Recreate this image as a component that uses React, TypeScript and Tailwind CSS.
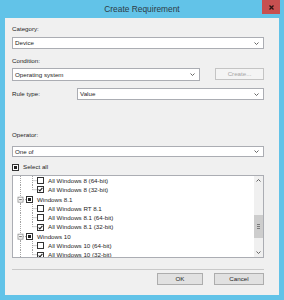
import React from 'react';

const ROW_H = 9.3;

type TreeRow = {
  level: 1 | 2;
  label: string;
  state: 'off' | 'on' | 'partial';
  last?: boolean;
};

const rows: TreeRow[] = [
  { level: 2, label: 'All Windows 8 (64-bit)', state: 'off' },
  { level: 2, label: 'All Windows 8 (32-bit)', state: 'on', last: true },
  { level: 1, label: 'Windows 8.1', state: 'partial' },
  { level: 2, label: 'All Windows RT 8.1', state: 'off' },
  { level: 2, label: 'All Windows 8.1 (64-bit)', state: 'off' },
  { level: 2, label: 'All Windows 8.1 (32-bit)', state: 'on', last: true },
  { level: 1, label: 'Windows 10', state: 'partial' },
  { level: 2, label: 'All Windows 10 (64-bit)', state: 'off' },
  { level: 2, label: 'All Windows 10 (32-bit)', state: 'on', last: true },
];

function Check({ state }: { state: 'off' | 'on' | 'partial' }) {
  return (
    <span className="flex h-[7px] w-[7px] shrink-0 items-center justify-center border border-[#333] bg-white">
      {state === 'on' && (
        <svg width="5" height="5" viewBox="0 0 5 5">
          <path d="M0.6 2.5 L1.9 3.9 L4.4 0.9" fill="none" stroke="#222" strokeWidth="1.1" />
        </svg>
      )}
      {state === 'partial' && <span className="h-[3px] w-[3px] bg-[#222]" />}
    </span>
  );
}

function Chevron({ up = false }: { up?: boolean }) {
  return (
    <svg width="5" height="3" viewBox="0 0 5 3">
      <path d={up ? 'M0.5 2.5 L2.5 0.5 L4.5 2.5' : 'M0.5 0.5 L2.5 2.5 L4.5 0.5'} fill="none" stroke="#555" strokeWidth="0.9" />
    </svg>
  );
}

function Select({ value, className = '' }: { value: string; className?: string }) {
  return (
    <div className={`flex items-center border border-[#abadb3] bg-white pl-[2px] pr-[4px] ${className}`}>
      <span className="flex-1 text-[6.2px] text-[#1e1e1e]">{value}</span>
      <Chevron />
    </div>
  );
}

function Lines({ row }: { row: TreeRow }) {
  const mid = ROW_H / 2;
  const dot = { stroke: '#a3a3a3', strokeWidth: 1, strokeDasharray: '1 1' };
  if (row.level === 1) {
    return (
      <svg width="13" height={ROW_H} className="shrink-0">
        <line x1="7.5" y1="0" x2="7.5" y2={ROW_H} {...dot} />
        <line x1="10" y1={mid} x2="13" y2={mid} {...dot} />
        <rect x="5" y={mid - 2.5} width="5" height="5" fill="white" stroke="#8e8e8e" strokeWidth="0.8" />
        <line x1="6.2" y1={mid} x2="8.8" y2={mid} stroke="#333" strokeWidth="0.8" />
      </svg>
    );
  }
  return (
    <svg width="24" height={ROW_H} className="shrink-0">
      <line x1="7.5" y1="0" x2="7.5" y2={ROW_H} {...dot} />
      <line x1="19.5" y1="0" x2="19.5" y2={row.last ? mid : ROW_H} {...dot} />
      <line x1="19.5" y1={mid} x2="24" y2={mid} {...dot} />
    </svg>
  );
}

export default function App() {
  return (
    <div
      className="flex h-[300px] w-[284px] flex-col bg-[#62c3e8] text-[#1e1e1e]"
      style={{ fontFamily: '"Liberation Sans", Arial, sans-serif' }}
    >
      {/* title bar */}
      <div className="relative flex h-[18px] shrink-0 items-center justify-center">
        <span className="text-[8.4px] text-[#2d3b45]">Create Requirement</span>
        <div className="absolute right-[4px] top-0 flex h-[14px] w-[18px] items-center justify-center bg-[#c75050]">
          <svg width="5" height="5" viewBox="0 0 5 5">
            <path d="M0.5 0.5 L4.5 4.5 M4.5 0.5 L0.5 4.5" stroke="#2a1414" strokeWidth="1.3" />
          </svg>
        </div>
      </div>

      <div className="mx-[5px] mb-[5px] flex flex-1 flex-col bg-[#f0f0f0] pl-[7px] pr-[15px]">
        <div className="mt-[7px] flex h-[8px] items-center text-[6.2px]">Category:</div>
        <Select value="Device" className="mt-[4px] h-[12px]" />

        <div className="mt-[8px] flex h-[8px] items-center text-[6.2px]">Condition:</div>
        <div className="mt-[3px] flex h-[13px] items-start gap-[15px]">
          <Select value="Operating system" className="h-[13px] w-[188px]" />
          <div className="flex h-[12px] flex-1 items-center justify-center border border-[#c4c4c4] bg-[#f4f4f4] text-[6.2px] text-[#a6a6a6]">
            Create...
          </div>
        </div>

        <div className="mt-[7px] flex h-[12px] items-center">
          <span className="w-[65px] text-[6.2px]">Rule type:</span>
          <Select value="Value" className="h-[12px] flex-1" />
        </div>

        <div className="mt-[31px] flex h-[8px] items-center text-[6.2px]">Operator:</div>
        <Select value="One of" className="mt-[7px] h-[11px]" />

        <div className="mt-[6px] flex h-[8px] items-center gap-[4px]">
          <Check state="partial" />
          <span className="text-[6.2px]">Select all</span>
        </div>

        {/* tree */}
        <div className="mt-[4px] flex h-[83px] border border-[#abadb3] bg-white">
          <div className="flex-1 overflow-hidden">
            {rows.map((row) => (
              <div key={row.label} className="flex items-center" style={{ height: ROW_H }}>
                <Lines row={row} />
                <Check state={row.state} />
                <span className="ml-[4px] whitespace-nowrap text-[6.2px]">{row.label}</span>
              </div>
            ))}
          </div>
          <div className="flex w-[9px] flex-col bg-[#f0f0f0]">
            <div className="flex h-[9px] items-center justify-center">
              <Chevron up />
            </div>
            <div className="flex-1">
              <div className="mx-auto mt-[30px] flex h-[23px] w-[9px] flex-col items-center justify-center gap-[1px] bg-[#cdcdcd]">
                <span className="h-[0.8px] w-[3px] bg-[#7a7a7a]" />
                <span className="h-[0.8px] w-[3px] bg-[#7a7a7a]" />
                <span className="h-[0.8px] w-[3px] bg-[#7a7a7a]" />
              </div>
            </div>
            <div className="flex h-[9px] items-center justify-center">
              <Chevron />
            </div>
          </div>
        </div>

        <div className="mt-[11px] h-[1px] bg-[#c9c9c9]" />

        <div className="mt-[3px] flex h-[12px] justify-end gap-[11px]">
          <div className="flex w-[46px] items-center justify-center border border-[#adadad] bg-[#e1e1e1] text-[6.2px]">OK</div>
          <div className="flex w-[50px] items-center justify-center border border-[#adadad] bg-[#e1e1e1] text-[6.2px]">Cancel</div>
        </div>
      </div>
    </div>
  );
}
